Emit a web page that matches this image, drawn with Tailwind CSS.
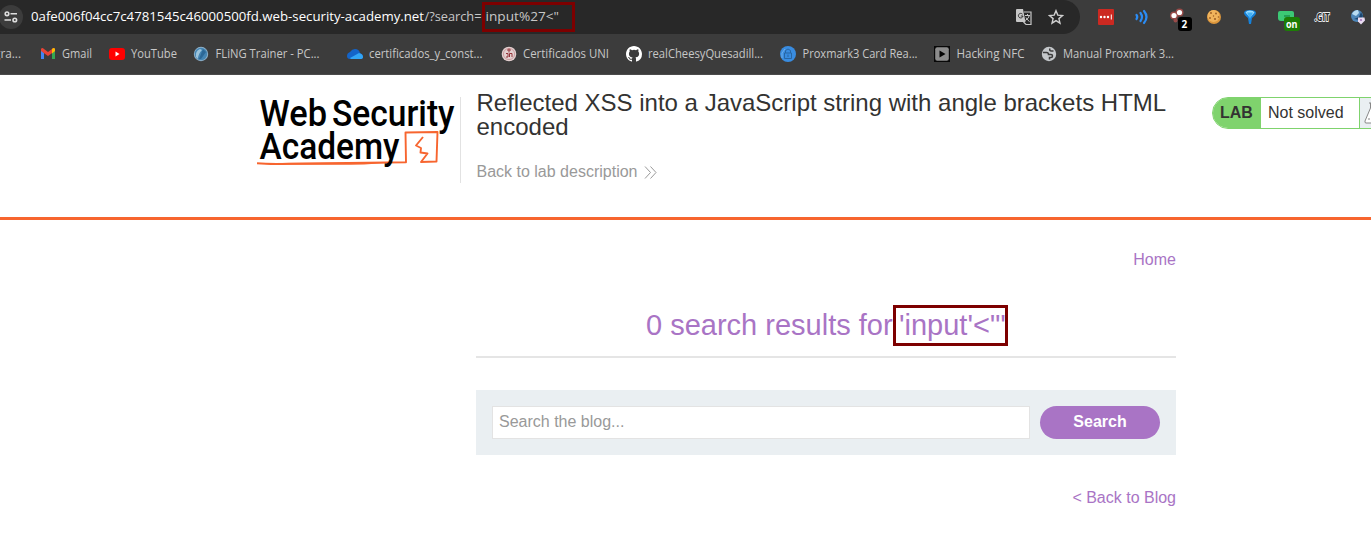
<!DOCTYPE html>
<html lang="en">
<head>
<meta charset="utf-8">
<title>Web Security Academy</title>
<script src="https://cdn.jsdelivr.net/npm/@tailwindcss/browser@4"></script>
</head>
<body class="w-[1371px] h-[536px] overflow-hidden bg-white font-['Liberation_Sans',sans-serif] text-[#333332]">
<div class="h-[75px] bg-[#3c3c3c] border-b border-[#4b4b4b] overflow-hidden font-['Open_Sans',sans-serif]">
  <div class="h-[34px] flex">
    <div class="relative w-[1096px] -ml-4 h-[34px] rounded-r-full rounded-bl-full bg-[#282828] flex items-center shrink-0">
      <div class="ml-[15px] w-6 h-6 rounded-full bg-[#3c3c3c] flex items-center justify-center shrink-0">
        <svg width="14" height="12" viewBox="0 0 14 12" fill="none" stroke="#dedede" stroke-width="1.6"><circle cx="3" cy="2.8" r="1.8"/><path d="M6.500 2.800H13M.5 9H7"/><circle cx="10.800" cy="9" r="1.800"/></svg>
      </div>
      <div class="ml-2 w-[452px] shrink-0"><svg class="block" width="452" height="20" font-size="13"><text x="0" y="14" fill="#fff" textLength="393" lengthAdjust="spacingAndGlyphs">0afe006f04cc7c4781545c46000500fd.web-security-academy.net</text><text x="393.500" y="14" fill="#c7c7c7" textLength="57" lengthAdjust="spacingAndGlyphs">/?search=</text></svg></div>
      <div class="-ml-[1px] w-[93px] h-[30px] border-[3px] border-[#7d0000] shrink-0"><svg class="block" width="87" height="24" font-size="13"><text x="0.500" y="16" fill="#c7c7c7" textLength="73.500" lengthAdjust="spacingAndGlyphs">input%27&lt;"</text></svg></div>
      <svg class="ml-auto mr-[47px] shrink-0" width="18" height="18" viewBox="0 0 18 18"><path d="M2 1h6l2.500 13H2a1 1 0 0 1-1-1V2a1 1 0 0 1 1-1z" fill="#c7c7c7"/><path d="M9 4h7v12.500h-5L8.500 14" fill="none" stroke="#c7c7c7" stroke-width="1.200"/><path d="M7.500 6.200A2.300 2.300 0 1 0 8 8H5.800" fill="none" stroke="#333" stroke-width="1"/><path d="M10 7.500h5M12.500 6v1.500M14.300 7.500q-.5 3-4 5M11 9.500q1.500 3 3.500 4" fill="none" stroke="#c7c7c7"/></svg>
      <svg class="absolute left-[1064px] top-[9px]" width="16" height="16" viewBox="0 0 16 16"><path d="m8 1.700 1.800 4.400 4.700.4-3.600 3.100 1.100 4.600L8 11.700l-4 2.500 1.100-4.600-3.600-3.100 4.700-.4z" fill="none" stroke="#d0d0d0" stroke-width="1.400"/></svg>
    </div>
    <svg class="ml-[16px] shrink-0" width="275" height="34" viewBox="1096 0 275 34">
      <rect x="1098" y="9" width="16" height="16" rx="1" fill="#cc2921"/><g fill="#fff"><circle cx="1101" cy="17" r="1.200"/><circle cx="1104.500" cy="17" r="1.200"/><circle cx="1108" cy="17" r="1.200"/><path d="M1110.800 14.500h1v5h-1z"/></g>
      <g fill="none" stroke="#2b8cf4" stroke-width="2.200" stroke-linecap="round"><path d="M1136.500 15q1.500 2 0 4M1140.500 13q3 4 0 8M1144 11q5 6 0 12"/></g>
      <g fill="#b9504e" opacity=".75"><circle cx="1174" cy="15.500" r="4"/><circle cx="1179.500" cy="12.500" r="4"/><circle cx="1175.500" cy="20.500" r="2"/></g><g fill="#fff"><circle cx="1174" cy="15.500" r="2.600"/><circle cx="1179.500" cy="12.500" r="2.600"/></g>
      <rect x="1178" y="17" width="14" height="14" rx="3" fill="#000"/><text x="1181.500" y="28" font-size="10" font-weight="700" fill="#fff">2</text>
      <circle cx="1214" cy="17" r="7" fill="#dc963c"/><circle cx="1213.500" cy="16" r="6" fill="#f0b35c"/><g fill="#9a5a20"><circle cx="1211" cy="13" r=".9"/><circle cx="1216" cy="13.500" r=".9"/><circle cx="1210" cy="18" r=".9"/><circle cx="1215" cy="19" r="1"/><circle cx="1218.500" cy="17" r=".8"/><circle cx="1213.500" cy="16" r=".7"/></g>
      <path d="M1244 13q0-3 6-3t6 3q0 2-4 5l-1 6h-2l-1-6q-4-3-4-5z" fill="#1681d9"/><path d="M1245.500 12.500q1-2 4.500-2t4.500 2l-3.500 4h-2z" fill="#9adcff"/><path d="m1247 12.500 3 6.500 3-6.500z" fill="#43b1f5"/>
      <path d="M1280 11h12q2 0 2 2v8h-13q-3 0-3-3v-5q0-2 2-2z" fill="#3cc875"/><path d="M1284 15h6v2h-6z" fill="#259d58"/><rect x="1284" y="17" width="16" height="14" rx="3" fill="#1c7d06"/><text x="1286" y="28" font-size="10" font-weight="700" fill="#fff" textLength="11.500" lengthAdjust="spacingAndGlyphs">on</text>
      <text x="1314.500" y="21" font-size="10.500" font-weight="700" fill="#222" stroke="#f1f1f1" stroke-width="1.800" paint-order="stroke" textLength="15" lengthAdjust="spacingAndGlyphs">.GIT</text>
      <circle cx="1357" cy="16" r="6" fill="#4e86b8"/><path d="M1352 14q2-4 6-4l1 3-3 3z" fill="#b8dcf2"/><path d="m1354 19 5-2 2-5 2 4-3 4z" fill="#1d4770"/><path d="M1358 17.500h6.500l.5 3-4 4-3-3z" fill="#e9dcf2"/><circle cx="1361" cy="20" r="1.100" fill="#a578bd"/>
    </svg>
  </div>
  <svg class="block" width="1371" height="40" viewBox="0 34 1371 40" font-size="12" fill="#c7c7c7">
    <text x="-6" y="58" textLength="27" lengthAdjust="spacingAndGlyphs">gra...</text>
    <path d="M41 50v9h3v-6z" fill="#4285f4"/><path d="M52 53v6h3v-9z" fill="#34a853"/><path d="M41 49q1-2 3 0l4 3 4-3q2-2 3 0v2l-7 5-7-5z" fill="#ea4335"/><path d="M52 49q2-2 3 0v2l-3 2.500z" fill="#fbbc04"/>
    <text x="62" y="58" textLength="30" lengthAdjust="spacingAndGlyphs">Gmail</text>
    <rect x="109" y="48" width="16" height="12" rx="3" fill="#f00"/><path d="m115.500 51.500 4 2.500-4 2.500z" fill="#fff"/>
    <text x="131" y="58" textLength="46" lengthAdjust="spacingAndGlyphs">YouTube</text>
    <circle cx="201" cy="54" r="7.200" fill="#8eb0c9"/><circle cx="201" cy="54" r="6.200" fill="#4585b3"/><path d="M196 57q-1-6 4-8l2 1q-4 4-4 9z" fill="#9cc4dc"/><path d="m203 49 3 3-5 7h-2z" fill="#2c6897"/>
    <text x="215.500" y="58" textLength="104" lengthAdjust="spacingAndGlyphs">FLiNG Trainer - PC...</text>
    <path d="M347 56q0-3 3-4 2-3 5-3 4 0 5 4 3 1 3 4 0 2-3 2h-10q-3 0-3-3z" fill="#1464c8"/><path d="m350 58 9-5q4 1 4 4 0 2-3 2h-9z" fill="#32a5f5"/>
    <text x="369" y="58" textLength="113.500" lengthAdjust="spacingAndGlyphs">certificados_y_const...</text>
    <circle cx="509" cy="54" r="7.300" fill="#e4d0d0"/><circle cx="509" cy="54" r="5.600" fill="none" stroke="#c08a8c" stroke-width=".7"/><path d="M509 48.500v4M507 50h4M506 53.500h2v3.500h-2M509.500 57v-3.500h2.500v3.500" fill="none" stroke="#94343a" stroke-width="1"/>
    <text x="523" y="58" textLength="86" lengthAdjust="spacingAndGlyphs">Certificados UNI</text>
    <path transform="translate(626 46)" d="M8 0C3.580 0 0 3.580 0 8c0 3.540 2.290 6.530 5.470 7.590.4.070.55-.17.55-.38 0-.19-.01-.82-.01-1.490-2.010.37-2.530-.49-2.690-.94-.09-.23-.48-.94-.82-1.130-.28-.15-.68-.52-.01-.53.63-.01 1.080.58 1.230.82.72 1.210 1.870.87 2.330.66.07-.52.28-.87.51-1.070-1.780-.2-3.640-.89-3.640-3.950 0-.87.31-1.590.82-2.150-.08-.2-.36-1.020.08-2.120 0 0 .67-.21 2.200.82a7.600 7.600 0 0 1 4 0c1.530-1.040 2.200-.82 2.200-.82.44 1.100.16 1.920.08 2.120.51.56.82 1.270.82 2.150 0 3.070-1.870 3.750-3.650 3.950.29.25.54.73.54 1.480 0 1.070-.01 1.930-.01 2.200 0 .21.15.46.55.38A8.010 8.010 0 0 0 16 8c0-4.420-3.580-8-8-8z" fill="#fff"/>
    <text x="648" y="58" textLength="115" lengthAdjust="spacingAndGlyphs">realCheesyQuesadill...</text>
    <circle cx="788" cy="54" r="8" fill="#398ce0"/><path d="M785.500 53v-2.500q2.500-3 5 0v2.500M784.500 53h7v5.500h-7zM788 54.500v2.500" fill="none" stroke="#2866a4" stroke-width="1"/><path d="M782 58v-5l3-4" fill="none" stroke="#7cb8ed" stroke-width=".8"/>
    <text x="802.500" y="58" textLength="115" lengthAdjust="spacingAndGlyphs">Proxmark3 Card Rea...</text>
    <path d="M934 46h16v16h-16z" fill="#080808"/><rect x="935.200" y="47.200" width="13.600" height="13.600" rx="2" fill="#8c8c8c"/><path d="m939.500 50.500 6 3.500-6 3.500z" fill="#050505"/>
    <text x="956.500" y="58" textLength="68" lengthAdjust="spacingAndGlyphs">Hacking NFC</text>
    <circle cx="1049" cy="54" r="7.200" fill="#c4c7ca"/><path d="M1043 52.500h3.500q2 0 2 2h2.500q1.500 0 1.500 1.500t-1.500 1.500h-1.500v2M1050 48.500q-1 2.500 1.500 2.500h2" fill="none" stroke="#3c3c3c" stroke-width="1.500"/>
    <text x="1063" y="58" textLength="111" lengthAdjust="spacingAndGlyphs">Manual Proxmark 3...</text>
  </svg>
</div>

<header class="h-[145px] border-b-[3px] border-[#f7652f] flex items-start overflow-hidden">
  <svg class="ml-[250px] shrink-0" width="210" height="110" viewBox="250 75 210 110" font-family="Roboto, sans-serif" font-weight="500" font-size="37.500" fill="#000">
    <text x="259.500" y="125.500" textLength="67.500" lengthAdjust="spacingAndGlyphs">Web</text>
    <text x="332" y="125.500" textLength="122.500" lengthAdjust="spacingAndGlyphs">Security</text>
    <path d="M257 163.300q12 1 32 .5l117-1.600-.5-29.700 32-.5-1 29.500-15.500.5 6.500-8.500-7-1 .5-4.500-5-2.500 7-8.500" fill="none" stroke="#f7652f" stroke-width="1.900" stroke-linejoin="round"/>
    <path d="M257 163.200q15-.7 133-.4l-26 1.700q-92 1-107-1.300z" fill="#f7652f"/>
    <text x="259.500" y="158.500" textLength="140" lengthAdjust="spacingAndGlyphs">Academy</text>
  </svg>
  <div class="mt-[22px] w-[716px] h-[86px] border-l border-[#e2e2e2] pl-[15.500px] shrink-0">
    <h2 class="-mt-[6px] w-[700px] text-[24px] leading-6 font-normal">Reflected XSS into a JavaScript string with angle brackets HTML encoded</h2>
    <a class="mt-[22px] flex items-center gap-[7px] text-base leading-[22px] text-[#999]">Back to lab description
      <svg width="13" height="13" viewBox="0 0 13 13" fill="none" stroke="#999" stroke-width="1"><path d="m1 .5 5.500 6-5.500 6M6.500.5l5.500 6-5.500 6"/></svg></a>
  </div>
  <div class="mt-[22px] ml-[36px] h-8 w-[180px] shrink-0 rounded-l-[16px] border border-[#7fd36d] bg-white flex overflow-hidden text-base leading-[30px]">
    <span class="w-12 bg-[#7fd36d] pl-[7px] font-bold">LAB</span>
    <span class="w-[99px] pl-[7px] border-r border-[#7fd36d]">Not solved</span>
    <span class="flex-1 bg-[#eaeff2] pl-1 pt-1"><svg width="22" height="22" viewBox="0 0 22 22" fill="#fff" stroke="#888"><path d="M5 1h8M6.500 1v5L1 19q-.5 2 1 2h18q2 0 1-2L13 6V1"/><path d="M4 17h2M7 13h2"/></svg></span>
  </div>
</header>

<main class="ml-[476px] w-[700px] flex flex-col">
  <a class="mt-[29px] self-end text-base leading-[22px] text-[#a974c5]">Home</a>
  <div class="mt-[35px] h-[52px] border-b-2 border-[#e5e5e5] flex">
    <h1 class="pl-[170px] w-[417px] whitespace-nowrap text-[29px] leading-[38px] font-normal text-[#a974c5]">0 search results for</h1>
    <span class="-mt-[1px] w-[115px] h-[41px] border-[3px] border-[#7d0000] pl-[3px] whitespace-nowrap text-[29px] leading-[35px] text-[#a974c5]">'input'&lt;"'</span>
  </div>
  <div class="mt-[32px] h-[65px] bg-[#eaeff2] p-4 flex gap-[10px]">
    <div class="w-[538px] h-[33px] bg-white border border-[#e3e3e3] pl-[6px] text-base leading-[30px] text-[#999]">Search the blog...</div>
    <button class="w-[120px] h-[33px] rounded-full bg-[#a974c5] text-white font-bold text-base leading-[31px] pb-[2px]">Search</button>
  </div>
  <a class="mt-[32px] self-end text-base leading-[22px] text-[#a974c5]">&lt; Back to Blog</a>
</main>
</body>
</html>
